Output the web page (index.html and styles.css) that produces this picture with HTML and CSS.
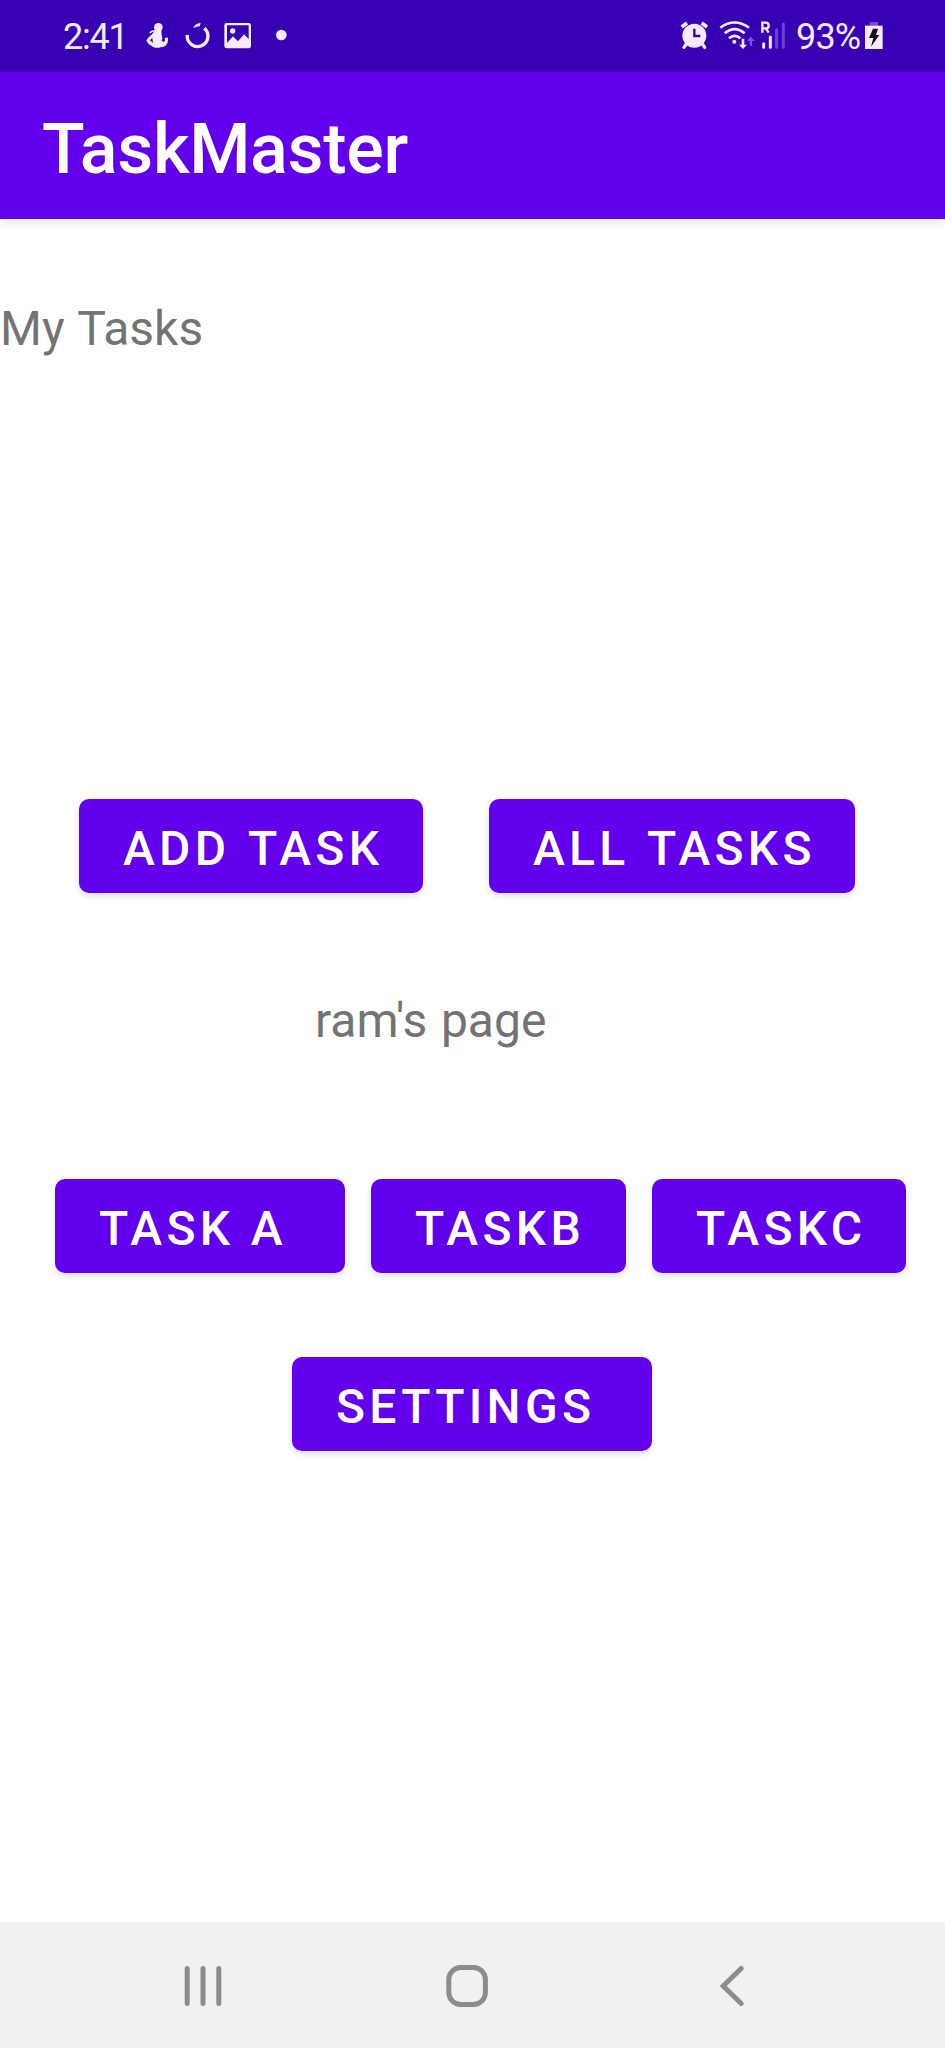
FILE: index.html
```html
<!DOCTYPE html>
<html lang="en">
<head>
<meta charset="utf-8">
<title>TaskMaster</title>
<link rel="stylesheet" href="styles.css">
</head>
<body>
<div class="screen">
  <header class="status-bar">
    <div class="status-left">
      <span class="clock">2:41</span>
      <svg class="notifications" viewBox="310 0 450 219" fill="#f6eaff">
        <circle cx="356" cy="82" r="13"/>
        <path d="M347 91h18l1 14q4 8 0 18 7 4 9 1 2-4 0-9l9-3q4 10-1 18-6 12-20 12-12 4-24-2-14-7-19-18 4-9 14-16z"/>
        <path d="M331 121l7-7 2 15z" fill="#3700b3"/>
        <path d="M330 99q8-9 20-6" fill="none" stroke="#f6eaff" stroke-width="5"/>
        <path d="M443 105a31 31 0 1 0 51-20" fill="none" stroke="#f6eaff" stroke-width="10"/>
        <path d="M461 84q4-13 22-15l-3 10q-8 0-19 5z"/>
        <path fill-rule="evenodd" d="M561 69h66q7 0 7 7v62q0 7-7 7h-66q-7 0-7-7V76q0-7 7-7zm1 7v52l18-19 15 15 18-21 14 14V76z"/>
        <circle cx="579" cy="93" r="8"/>
        <circle cx="725" cy="105" r="16"/>
      </svg>
    </div>
    <div class="status-right">
      <svg class="signals" viewBox="50 0 330 219" fill="#f6eaff">
        <circle cx="99" cy="107" r="36"/>
        <path d="M61 81l16-12M137 81l-16-12" stroke="#f6eaff" stroke-width="11"/>
        <path d="M75 132l-7 10M123 132l7 10" stroke="#f6eaff" stroke-width="10" stroke-linecap="round"/>
        <path d="M99 86v22h18" fill="none" stroke="#3700b3" stroke-width="7"/>
        <g fill="none" stroke="#f6eaff" stroke-width="8">
          <path d="M177 83q42-31 86 0"/>
          <path d="M190 100q30-25 60 0"/>
          <path d="M203 115q17-15 34 0"/>
        </g>
        <circle cx="219" cy="125" r="6"/>
        <path d="M241 116h8v18h8l-12 13-12-13h8z"/>
        <path d="M265 137h7v-14h8l-12-13-11 13h8z" fill="#8450e8"/>
        <path d="M303 98V68h10q9 0 9 9 0 8-9 8h-8M313 84l9 14" fill="none" stroke="#f6eaff" stroke-width="7"/>
        <path d="M307 131v11M327 111v31" stroke="#f6eaff" stroke-width="9" stroke-linecap="round"/>
        <path d="M346 89v53M366 72v70" stroke="#7040df" stroke-width="9" stroke-linecap="round"/>
      </svg>
      <span class="percent">93%</span>
      <svg class="battery" viewBox="610 0 60 219">
        <path d="M627 66h25v13h-25z" fill="#7c48df"/>
        <path d="M613 77h53v70h-53z" fill="#f6eaff"/>
        <path d="M637 86h15l-6 19h10l-25 35 7-26h-13z" fill="#111"/>
      </svg>
    </div>
  </header>
  <div class="app-bar"><h1 class="title">TaskMaster</h1></div>
  <main class="content">
    <p class="heading">My Tasks</p>
    <div class="row primary-row">
      <button class="btn add">ADD TASK</button>
      <button class="btn all">ALL TASKS</button>
    </div>
    <p class="owner">ram's page</p>
    <div class="row task-row">
      <button class="btn task-a">TASK A</button>
      <button class="btn task-b">TASKB</button>
      <button class="btn task-c">TASKC</button>
    </div>
    <div class="row settings-row">
      <button class="btn settings">SETTINGS</button>
    </div>
  </main>
  <nav class="nav-bar">
    <svg class="nav-icon" viewBox="0 0 48 48"><path d="M8.200 6.500v35M24 6.500v35M39.800 6.500v35"/></svg>
    <svg class="nav-icon" viewBox="0 0 48 48"><rect x="5.800" y="5.500" width="36.600" height="37" rx="12"/></svg>
    <svg class="nav-icon" viewBox="0 0 48 48"><path d="M34.200 6.500L16.200 24l18 17.500"/></svg>
  </nav>
</div>
</body>
</html>
```
FILE: styles.css
```css
* {
  box-sizing: border-box;
}

body {
  margin: 0;
  font-family: Roboto, "Liberation Sans", sans-serif;
}

.screen {
  display: flex;
  flex-direction: column;
  width: 945px;
  height: 2048px;
  background: #fff;
}

.status-bar {
  display: flex;
  justify-content: space-between;
  height: 72px;
  padding: 0 61px 0 63px;
  background: #3700b3;
  color: #f6eaff;
  font-size: 36px;
  line-height: 75px;
}

.status-left,
.status-right {
  display: flex;
}

.clock {
  width: 80px;
  letter-spacing: -1.2px;
}

.clock,
.percent {
  height: 72px;
  white-space: nowrap;
}

.notifications {
  width: 150px;
  height: 73px;
}

.signals {
  width: 110px;
  height: 73px;
}

.percent {
  width: 68px;
  margin-left: 8px;
  letter-spacing: -0.8px;
}

.battery {
  width: 20px;
  height: 73px;
}

.app-bar {
  z-index: 1;
  height: 147px;
  padding: 7px 0 0 42px;
  background: #6200ee;
  box-shadow: 0 4px 9px rgba(0, 0, 0, 0.1);
}

.title {
  margin: 0;
  color: #fff;
  font-size: 70px;
  font-weight: 500;
  letter-spacing: -0.3px;
  line-height: 140px;
}

.content {
  flex: 1;
}

.heading,
.owner {
  margin: 0;
  color: #737373;
  font-size: 48px;
  line-height: 56px;
  word-spacing: 1.6px;
}

.heading {
  padding-top: 82px;
}

.row {
  display: flex;
}

.primary-row {
  gap: 66px;
  margin-top: 442px;
  padding-left: 79px;
}

.owner {
  margin-top: 100px;
  padding-left: 315px;
}

.task-row {
  gap: 26px;
  margin-top: 130px;
  padding-left: 55px;
}

.settings-row {
  margin-top: 84px;
  padding-left: 292px;
}

.btn {
  flex: none;
  height: 94px;
  padding: 6px 0 0 44px;
  border: 0;
  border-radius: 10px;
  background: #6200ee;
  box-shadow: 0 3px 6px rgba(0, 0, 0, 0.14);
  color: #fff;
  font-family: inherit;
  font-size: 48px;
  font-weight: 500;
  letter-spacing: 4.29px;
  line-height: 88px;
  text-align: left;
  white-space: nowrap;
}

.add {
  width: 344px;
  word-spacing: 2.4px;
}

.all {
  width: 366px;
  word-spacing: 2.4px;
}

.task-a {
  width: 290px;
}

.task-b {
  width: 255px;
}

.task-c {
  width: 254px;
}

.settings {
  width: 360px;
}

.nav-bar {
  display: flex;
  align-items: center;
  gap: 216px;
  height: 126px;
  padding: 2px 0 0 179px;
  background: #f1f1f1;
}

.nav-icon {
  width: 48px;
  height: 48px;
  fill: none;
  stroke: #8c8c8c;
  stroke-width: 5;
  stroke-linecap: round;
}
```
